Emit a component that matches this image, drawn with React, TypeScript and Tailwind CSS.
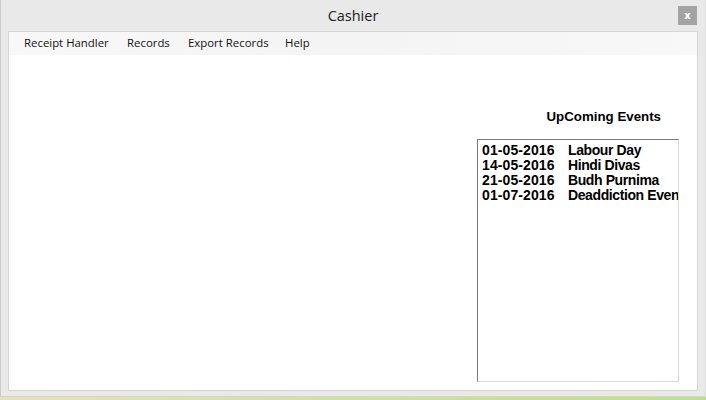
import React from "react";

const events = [
  ["01-05-2016", "Labour Day"],
  ["14-05-2016", "Hindi Divas"],
  ["21-05-2016", "Budh Purnima"],
  ["01-07-2016", "Deaddiction Event"],
];

export default function App() {
  return (
    <div className="w-[706px] h-[400px] flex flex-col bg-[#e0e2b8] overflow-hidden">
      <div className="h-[397px] flex flex-col bg-[#e9e9e9] border-l border-[#c8c8c8] border-r border-r-[#dcdcdc] border-b border-b-[#d4d4d4]">
        {/* title bar */}
        <div className="h-[31px] flex items-center relative shrink-0">
          <div className="flex-1 text-center text-[14.5px] text-[#222] pt-[1px]" style={{ fontFamily: '"Open Sans", "Noto Sans", sans-serif' }}>
            Cashier
          </div>
          <div className="absolute right-[8px] top-[6px] w-[19px] h-[19px] bg-[#a3a3a3] flex items-center justify-center text-white text-[10px] font-bold leading-none" style={{ fontFamily: '"DejaVu Sans", sans-serif' }}>
            x
          </div>
        </div>
        {/* client */}
        <div className="mx-[7px] flex-1 mb-[5px] bg-white border border-[#d6d6d6] flex flex-col">
          <div className="h-[23px] shrink-0 flex items-center bg-gradient-to-r from-[#f8f8f8] via-[#f4f4f4] to-[#f8f8f8] text-[11.4px] text-[#111] pl-[15px] pb-[2px]" style={{ fontFamily: '"Open Sans", "Noto Sans", sans-serif' }}>
            <span className="w-[103px]">Receipt Handler</span>
            <span className="w-[61px]">Records</span>
            <span className="w-[97px]">Export Records</span>
            <span>Help</span>
          </div>
          <div className="flex-1 flex justify-end pr-[18px]">
            <div className="flex flex-col items-end">
              <div className="mt-[52px] mr-[18px] text-[13.3px] font-bold text-black" style={{ fontFamily: '"Liberation Sans", Arial, sans-serif' }}>
                UpComing Events
              </div>
              <div className="mt-[12px] w-[202px] h-[243px] border-t border-l border-t-[#7a7a7a] border-l-[#7a7a7a] border-r border-b border-r-[#dadada] border-b-[#dadada] overflow-hidden pt-[3px] pl-[4px]" style={{ fontFamily: '"Liberation Sans", Arial, sans-serif' }}>
                {events.map(([d, n]) => (
                  <div key={d} className="flex h-[15px] items-center text-[14px] font-bold text-black whitespace-nowrap leading-none">
                    <span className="w-[86px] shrink-0 tracking-[0.1px]">{d}</span>
                    <span className="tracking-[-0.4px]">{n}</span>
                  </div>
                ))}
              </div>
            </div>
          </div>
        </div>
      </div>
      <div className="flex-1 bg-gradient-to-r from-[#e4e3b8] via-[#cfe0a0] to-[#bfe08a]" />
    </div>
  );
}
